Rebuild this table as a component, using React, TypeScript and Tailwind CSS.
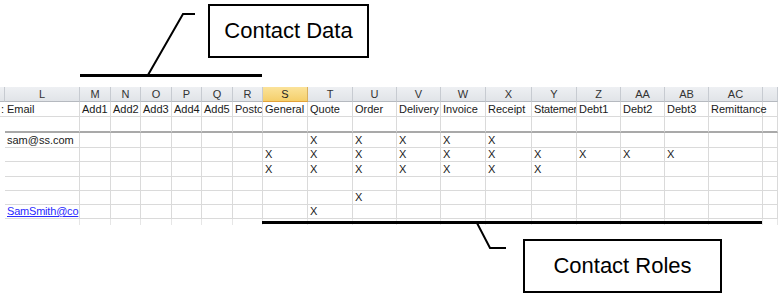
import React from "react";

const widths = [
  "w-[5px]", "w-[75px]", "w-[31px]", "w-[30px]", "w-[31px]", "w-[30px]", "w-[31px]", "w-[30px]",
  "w-[45px]", "w-[45px]", "w-[44px]", "w-[44px]", "w-[45px]", "w-[46px]", "w-[45px]", "w-[44px]",
  "w-[44px]", "w-[44px]", "w-[54px]", "w-[15px]",
];

const letters = ["", "L", "M", "N", "O", "P", "Q", "R", "S", "T", "U", "V", "W", "X", "Y", "Z", "AA", "AB", "AC", ""];

const titles = ["", "Email", "Add1", "Add2", "Add3", "Add4", "Add5", "Postc", "General", "Quote", "Order", "Delivery", "Invoice", "Receipt", "Statemer", "Debt1", "Debt2", "Debt3", "Remittance", ""];

const dataRows: { h: string; cells: Record<number, string>; link?: boolean }[] = [
  { h: "h-[15px]", cells: { 1: "sam@ss.com", 9: "X", 10: "X", 11: "X", 12: "X", 13: "X" } },
  { h: "h-[14px]", cells: { 8: "X", 9: "X", 10: "X", 11: "X", 12: "X", 13: "X", 14: "X", 15: "X", 16: "X", 17: "X" } },
  { h: "h-[15px]", cells: { 8: "X", 9: "X", 10: "X", 11: "X", 12: "X", 13: "X", 14: "X" } },
  { h: "h-[14px]", cells: {} },
  { h: "h-[14px]", cells: { 10: "X" } },
  { h: "h-[14px]", cells: { 1: "SamSmith@co", 9: "X" }, link: true },
];

function Cell({ i, h, text, link, extra }: { i: number; h: string; text?: string; link?: boolean; extra?: string }) {
  const first = i === 0;
  return (
    <div
      className={`${widths[i]} ${h} shrink-0 flex items-end pl-[2px] whitespace-nowrap leading-[13px] text-[11px] ${
        first ? "" : "border-r border-[#dadada]"
      } ${extra ?? ""} ${i === 18 ? "overflow-visible" : "overflow-hidden"}`}
    >
      {text ? (
        <span className={link ? "text-[#2a2aff] underline tracking-[-0.2px]" : "text-[#1a1a1a]"}>{text}</span>
      ) : null}
    </div>
  );
}

export default function App() {
  return (
    <div
      className="relative w-[782px] h-[296px] bg-white overflow-hidden"
      style={{ fontFamily: '"Liberation Sans", Arial, sans-serif' }}
    >
      <div className="h-[87px]" />

      <div className="flex flex-col">
        <div className="flex">
          {letters.map((l, i) => (
            <div
              key={i}
              className={`${widths[i]} h-[15px] shrink-0 flex items-center justify-center text-[11px] leading-none border-b ${
                i === 8
                  ? "bg-gradient-to-b from-[#fbe39a] to-[#f5cf6a] border-b-[#e3a33a] text-[#222] border-r border-r-[#d8b060]"
                  : "bg-gradient-to-b from-[#eef0f3] to-[#e1e4e8] border-b-[#b5b9bf] text-[#333] border-r border-r-[#c7cbd1]"
              }`}
            >
              {l}
            </div>
          ))}
        </div>

        <div className="flex">
          {titles.map((t, i) => (
            <div
              key={i}
              className={`${widths[i]} h-[15px] shrink-0 flex items-end whitespace-nowrap text-[11px] leading-[13px] text-[#1a1a1a] ${
                i === 0 ? "pl-[1px]" : "pl-[2px] border-r border-[#dadada]"
              } ${i === 14 ? "tracking-[-0.2px]" : ""} border-b border-b-[#dadada] ${i === 18 ? "overflow-visible" : "overflow-hidden"}`}
            >
              {i === 0 ? ":" : t}
            </div>
          ))}
        </div>

        <div className="flex">
          {titles.map((_, i) => (
            <div
              key={i}
              className={`${widths[i]} h-[16px] shrink-0 border-b-2 border-b-[#a9a9a9] ${
                i === 0 ? "border-b-transparent" : "border-r border-r-[#dadada]"
              }`}
            />
          ))}
        </div>

        {dataRows.map((r, ri) => (
          <div key={ri} className="flex">
            {titles.map((_, i) => (
              <Cell
                key={i}
                i={i}
                h={r.h}
                text={r.cells[i]}
                link={r.link && i === 1}
                extra={i === 0 ? "" : "border-b border-b-[#dadada]"}
              />
            ))}
          </div>
        ))}

        <div className="flex">
          {titles.map((_, i) => (
            <div
              key={i}
              className={`${widths[i]} h-[6px] shrink-0 ${i === 0 ? "" : "border-r border-r-[#e6e6e6]"}`}
            />
          ))}
        </div>
      </div>

      <svg
        className="absolute left-0 top-0 pointer-events-none"
        width="782"
        height="296"
        viewBox="0 0 782 296"
      >
        <rect x="80" y="74" width="182" height="3" fill="#000" />
        <polyline points="148,75 183,14 195,14" fill="none" stroke="#000" strokeWidth="2" />
        <rect x="262" y="221" width="500" height="3" fill="#000" />
        <polyline points="477,223 490,248 506,248" fill="none" stroke="#000" strokeWidth="2" />
      </svg>

      <div className="absolute left-[208px] top-[4px] w-[161px] h-[54px] border-2 border-black bg-white flex items-center justify-center text-[22px] text-black leading-none">
        Contact Data
      </div>

      <div className="absolute left-[523px] top-[239px] w-[199px] h-[54px] border-2 border-black bg-white flex items-center justify-center text-[22px] text-black leading-none">
        Contact Roles
      </div>
    </div>
  );
}
